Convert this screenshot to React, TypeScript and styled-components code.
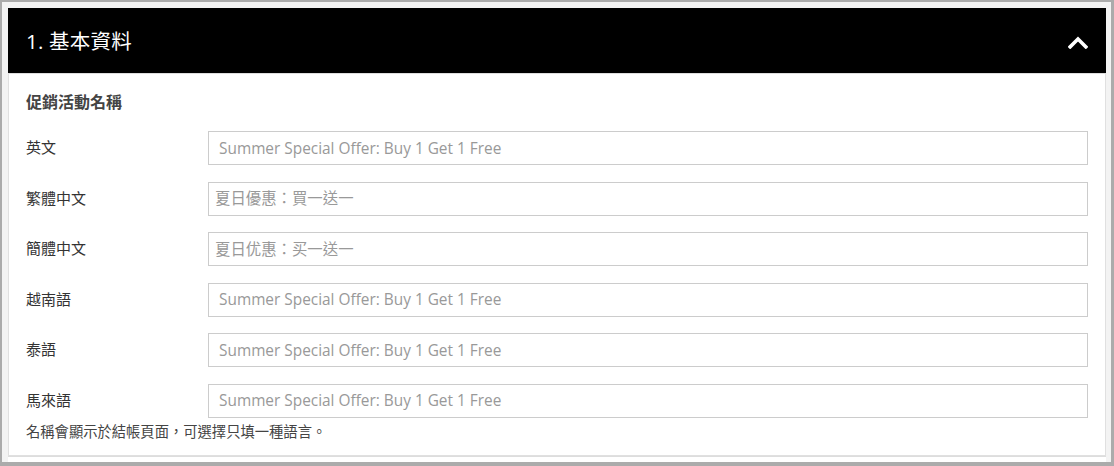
import React from "react"
import styled, { createGlobalStyle } from "styled-components"

const GlobalStyle = createGlobalStyle`
  html, body {
    margin: 0;
    padding: 0;
    background: #ffffff;
  }
  body {
    font-family: "Open Sans", "Noto Sans CJK TC", sans-serif;
    color: #333333;
  }
  * {
    box-sizing: border-box;
  }
`

const Frame = styled.div`
  width: 1114px;
  height: 466px;
  overflow: hidden;
  background: #f3f3f3;
  border-style: solid;
  border-color: #ababab;
  border-width: 2px 3px 4px 2px;
  padding: 6px 5px 0 6px;
`

const Panel = styled.section`
  background: #ffffff;
`

const PanelHeader = styled.header`
  height: 65px;
  background: #000000;
  color: #ffffff;
  display: flex;
  align-items: center;
  justify-content: space-between;
  padding: 0 18px;
`

const PanelTitle = styled.h2`
  margin: 0;
  font-size: 20.5px;
  font-weight: 400;
  line-height: 28px;
  letter-spacing: 0.2px;
`

const Toggle = styled.button`
  display: flex;
  align-items: center;
  padding: 0;
  margin-top: 4px;
  border: 0;
  background: none;
  cursor: pointer;
`

const PanelBody = styled.div`
  border: 1px solid #e0e0e0;
  border-top-color: #dddddd;
  padding: 17px 17px 13px;
`

const SectionTitle = styled.h3`
  margin: 0 0 18px;
  font-size: 16px;
  font-weight: 700;
  line-height: 22px;
  color: #444444;
`

const FieldList = styled.div`
  display: flex;
  flex-direction: column;
  gap: 16.6px;
`

const FieldRow = styled.label`
  display: grid;
  grid-template-columns: 182px 1fr;
  align-items: center;
`

const FieldLabel = styled.span`
  font-size: 15px;
  line-height: 20px;
  margin-top: -2px;
  color: #333333;
`

const TextInput = styled.input<{ $cjk?: boolean }>`
  height: 34px;
  width: 100%;
  border: 1px solid #cccccc;
  border-radius: 0;
  padding: 0 ${(props) => (props.$cjk ? "6px" : "10px")};
  font-family: "Open Sans", "Noto Sans CJK TC", sans-serif;
  font-size: 15.4px;
  color: #333333;
  outline: none;

  &::placeholder {
    color: #999999;
  }
`

const HelpText = styled.p`
  margin: 4px 0 0;
  font-size: 14.3px;
  line-height: 20px;
  color: #444444;
`

const NextPanel = styled.div`
  height: 20px;
  background: #ffffff;
  border-top: 1px solid #dddddd;
`

const ChevronUp = () => (
  <svg width="20" height="13" viewBox="0 0 20 13" aria-hidden="true">
    <polyline
      points="2.2,10.8 10,3 17.8,10.8"
      fill="none"
      stroke="#ffffff"
      strokeWidth="3.6"
      strokeLinecap="square"
      strokeLinejoin="miter"
    />
  </svg>
)

type Field = {
  label: string
  placeholder: string
  cjk?: boolean
}

const fields: Field[] = [
  { label: "英文", placeholder: "Summer Special Offer: Buy 1 Get 1 Free" },
  { label: "繁體中文", placeholder: "夏日優惠：買一送一", cjk: true },
  { label: "簡體中文", placeholder: "夏日优惠：买一送一", cjk: true },
  { label: "越南語", placeholder: "Summer Special Offer: Buy 1 Get 1 Free" },
  { label: "泰語", placeholder: "Summer Special Offer: Buy 1 Get 1 Free" },
  { label: "馬來語", placeholder: "Summer Special Offer: Buy 1 Get 1 Free" },
]

export default function App() {
  return (
    <>
      <GlobalStyle />
      <Frame>
        <Panel>
          <PanelHeader>
            <PanelTitle>1. 基本資料</PanelTitle>
            <Toggle aria-label="收合">
              <ChevronUp />
            </Toggle>
          </PanelHeader>
          <PanelBody>
            <SectionTitle>促銷活動名稱</SectionTitle>
            <FieldList>
              {fields.map((field) => (
                <FieldRow key={field.label}>
                  <FieldLabel>{field.label}</FieldLabel>
                  <TextInput
                    type="text"
                    placeholder={field.placeholder}
                    $cjk={field.cjk}
                  />
                </FieldRow>
              ))}
            </FieldList>
            <HelpText>名稱會顯示於結帳頁面，可選擇只填一種語言。</HelpText>
          </PanelBody>
        </Panel>
        <NextPanel />
      </Frame>
    </>
  )
}
